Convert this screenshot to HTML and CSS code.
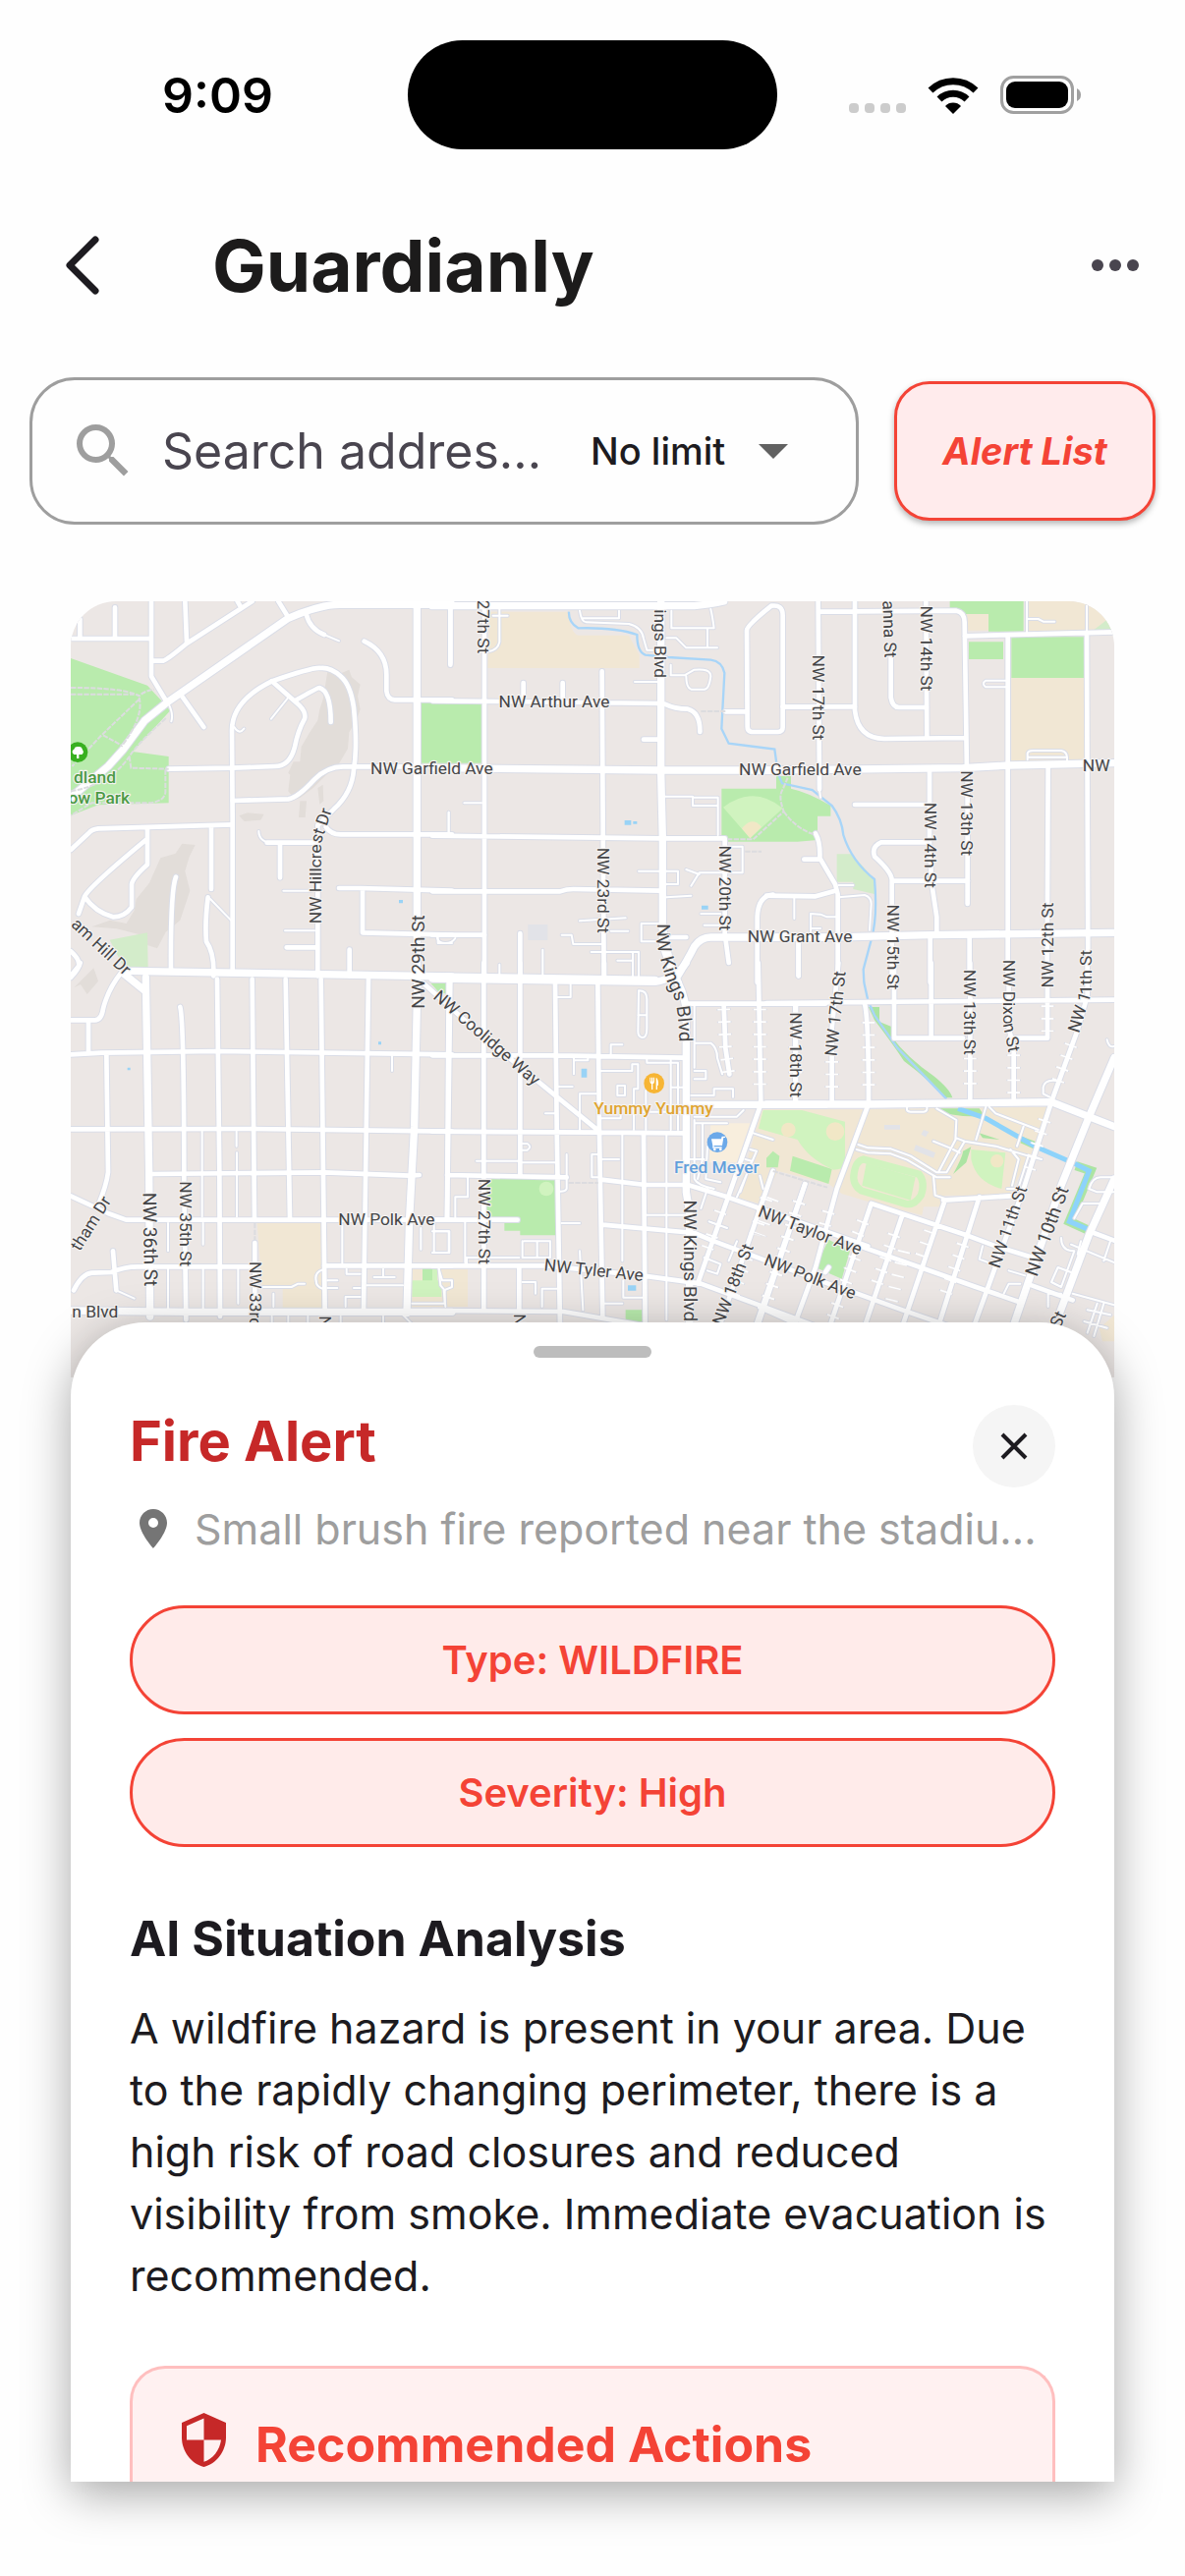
FILE: index.html
```
<!DOCTYPE html>
<html lang="en">
<head>
    <meta charset="utf-8">
    <meta name="viewport" content="width=device-width, initial-scale=1">
    <title>Guardianly</title>
    <link rel="stylesheet" href="styles.css">
</head>
<body>
    <div class="status-bar">
        <span class="status-time">9:09</span>
        <span class="island"></span>
        <div class="status-icons">
            <span class="signal"><i></i><i></i><i></i><i></i></span>
            <svg class="wifi" viewBox="0 0 52 38" aria-hidden="true">
                <path class="wifi-arc" d="M3 14A33 33 0 0 1 49 14M12 23A20 20 0 0 1 40 23"/>
                <path d="M26 38L18 30A11 11 0 0 1 34 30Z"/>
            </svg>
            <svg class="battery" viewBox="0 0 83 39" aria-hidden="true">
                <rect x="1.5" y="1.5" width="72" height="36" rx="12" fill="none" stroke="#a0a0a0" stroke-width="3"/>
                <rect x="6" y="6" width="63" height="27" rx="9"/>
                <path d="M78 13Q82 15 82 19.500T78 26Z" fill="#a0a0a0"/>
            </svg>
        </div>
    </div>

    <header class="app-bar">
        <button class="icon-button" aria-label="Back">
            <svg class="back-icon" viewBox="0 0 36 60"><path d="M31 4L5 30L31 56"/></svg>
        </button>
        <h1 class="app-title">Guardianly</h1>
        <button class="icon-button" aria-label="More">
            <svg class="more-icon" viewBox="0 0 50 14"><circle cx="7" cy="7" r="6"/><circle cx="25" cy="7" r="6"/><circle cx="43" cy="7" r="6"/></svg>
        </button>
    </header>

    <div class="toolbar">
        <div class="search-box">
            <svg class="search-icon" viewBox="3 3 18 18" aria-hidden="true"><path d="M15.5 14h-.79l-.28-.27A6.47 6.47 0 0 0 16 9.500 6.500 6.500 0 1 0 9.500 16c1.610 0 3.090-.59 4.230-1.570l.27.28v.79l5 4.990L20.490 19zm-6 0C7.010 14 5 11.990 5 9.500S7.010 5 9.500 5 14 7.010 14 9.500 11.990 14 9.500 14"/></svg>
            <input class="search-input" type="text" placeholder="Search addres..." aria-label="Search address">
            <select class="limit-select" aria-label="Distance limit">
                <option>No limit</option>
            </select>
            <span class="caret"></span>
        </div>
        <button class="alert-button">Alert List</button>
    </div>

    <main class="content">
        <svg class="map" viewBox="0 0 3186 2370" role="img" aria-label="Map">
            <defs>
                <g id="roads">
                    <!-- north west -->
                    <g transform="translate(-36 -36)">
                        <path class="major" d="M36 635L150 540L195 490L262 400L330 345L700 88Q800 45 860 46H1200M1093 46V1175M215 1165L1200 1182"/>
                        <path class="street" d="M36 150H280M64 90V150M171 55V150M282 36V265L330 345M385 36L390 160M285 218H318Q330 215 390 165L590 36M545 36L556 55M670 36L700 85M755 75Q765 120 810 138M932 158Q1000 190 1000 260V310Q1003 336 1025 337H1200M1195 60V230M375 325L442 420"/>
                        <path class="street" d="M530 1170L530 700L528 430Q528 340 650 280Q780 235 800 240Q830 238 860 265Q890 290 900 360Q912 480 900 550Q895 620 840 670L790 720V1180M815 725Q830 748 860 748H1200"/>
                        <path class="street" d="M650 280L735 355Q755 375 750 395Q730 430 720 480Q705 540 660 540L528 545L335 548M720 340Q790 300 795 300Q830 310 830 405M530 645L700 640Q730 635 780 580Q820 540 870 541H1107"/>
                        <path class="street" d="M530 718L120 730Q100 732 90 745L36 795M270 730V840Q225 880 222 900V970Q200 1000 165 1000Q110 985 78 938Q90 910 265 765M78 938L60 990M465 725V915M455 940Q445 1020 450 1075Q475 1110 472 1180M357 878Q340 920 342 1170M635 773H790M675 780V880M887 1100V1180M695 1093H783M855 912H920L1200 920M927 915V1048L1200 1055M36 1105Q65 1130 60 1150L36 1180"/>
                        <path class="lane" d="M610 738Q610 770 650 775M810 138L855 157M685 920H770M690 1042H780M700 330L648 395M462 945L525 1010M1190 680V745M535 420Q550 445 565 425M335 350Q350 380 343 403M1157 1060V1080H1200"/>
                    </g>
                    <!-- north -->
                    <g transform="translate(1104 -36)">
                        <path class="major" d="M0 50H800Q850 45 890 36M698 36V560L703 760V1030Q720 1140 750 1200M740 1195Q780 1130 800 1090Q820 1062 850 1062H1200M0 545L700 552H1100M0 1182L680 1192"/>
                        <path class="street" d="M159 60V1180M0 340L200 342L700 348M518 250L524 1190M55 60V225M278 285V340M398 285V340M0 752L700 760H893V1050L905 1140M0 922H390Q410 915 430 915L700 920M0 1055H160M268 1050V1180M645 458H690M710 350Q740 365 780 365Q818 375 817 435M895 373H960M1070 358H1200M725 1062H775M1118 1070V1180M992 1200V1000Q995 935 1040 932"/>
                        <path class="street" d="M960 125Q960 110 1035 50Q1070 45 1070 80V420Q1070 435 1055 435H975Q962 433 962 420Z"/>
                        <path class="lane" d="M450 65Q455 100 470 100L600 105Q640 115 645 150L655 185H700M460 88H570V65M730 65V118H860Q855 80 850 60M840 118V178M715 148H745L775 178H870M728 230V262H770L800 245Q850 240 850 265Q845 305 830 305H790Q775 300 775 265M618 282H690M710 632H795V660H872M795 635H872V750"/>
                        <path class="lane" d="M630 860H750V900H715M715 940L790 935M638 1020V1075H690M638 1020H690M395 1055H425L430 1083H518M450 1012L590 1003M485 1107H630V1180M565 1133H612V1110V1180M545 1043H598M337 1100V1180M205 1145V1180M50 680V750M97 652H150M947 785V865H815L790 905M775 855L815 870M900 785H947M820 990H880M830 1025H880M205 60V160Q200 185 170 190M185 80H230M1105 940V1005M15 1065Q20 1080 40 1080T70 1065"/>
                    </g>
                    <!-- north east -->
                    <g transform="translate(2124 -36)">
                        <path class="major" d="M0 552L600 545L740 537L1062 530M0 1062H200L500 1055L1062 1048"/>
                        <path class="street" d="M158 36L162 610M270 36V370Q280 455 360 456L605 453M160 68L580 65Q605 70 605 100L612 560M380 205V330Q385 360 405 360H490M487 36L490 450M605 142L1062 130M737 145V1200M978 135L982 1140M860 545L857 1140M498 550V780L505 900L520 1000V1050M270 657H498"/>
                        <path class="street" d="M490 772H350Q320 785 330 815Q380 860 383 885V1200M383 890H615M614 560V960M50 358H270M500 1060V1200M620 1060V1200M150 745Q165 770 163 820L210 900L218 930V1200M115 824H163M0 935L150 937L210 920M98 1080V1180"/>
                        <path class="lane" d="M795 36V130M730 278H670Q655 288 670 298H730M797 520V500Q800 490 820 492H900Q920 495 918 520M800 512H918M795 90H830L845 98H880M220 940L300 933Q320 940 320 960L315 1040M135 1060V990L165 992L185 1000H215M140 1035H165M220 903H265M162 610L165 635M978 50V130"/>
                    </g>
                    <!-- south west -->
                    <g transform="translate(-36 1104)">
                        <path class="major" d="M200 35L262 85M265 45L275 640L278 1080M1095 30L1085 500L1070 780L1062 1070M36 1062L400 1066L1200 1066"/>
                        <path class="street" d="M483 50L490 640L492 1080M590 50L597 780M692 50L705 780M800 50L812 1070M945 50L930 1070M370 135Q382 180 382 680L388 1090M598 855V1060M1190 50L1185 780"/>
                        <path class="street" d="M36 280L130 275L480 270L1200 280M36 508L590 507L1200 515M285 645L810 640L1070 650L1100 648M36 712L150 765L205 785H1200M145 280L150 640Q145 680 120 740M36 175H110Q130 175 135 140Q150 80 190 30M90 180V275M45 1000Q70 950 100 947L160 945Q200 928 240 928H590M165 880L175 1000M810 925H1200M36 45Q60 20 65 0"/>
                        <path class="lane" d="M175 1000L230 1025M437 515V775M440 795V860M440 935V1055M542 515V560M543 580V775M547 930V1040M333 795V880M333 935V1055M865 800V920M1017 285V330M600 990H710L730 980H750M655 1010V1050M805 937Q780 945 785 970Q785 990 805 995M820 970H850M820 993H850M900 993H920M940 985H1050M962 960H1025M990 935V960M878 935V950H920M875 1050V1020H920M1145 790V885H1192V820H1145M1105 810V875M1160 935L1165 985L1178 1000V1040H1078"/>
                        <path class="lane" d="M650 1080V1100M700 1080V1100M760 1080V1100M860 1080V1100M990 1080V1100M1050 1075L1080 1105"/>
                    </g>
                    <!-- south -->
                    <g transform="translate(1104 1104)">
                        <path class="major" d="M0 48L680 58Q740 50 775 0M703 -110V-60Q720 0 750 60Q780 120 775 180V700L785 760V1120M780 433H1200"/>
                        <path class="street" d="M-30 60L160 230L510 515M55 60L45 780M157 0V1060M268 0V650M265 925V1060M375 60L380 500L390 1120M505 60L510 520L520 1080M525 0V50M0 283H380L770 290M0 515L510 518L770 520M0 785H260M45 648L410 655M515 662L650 678H780L900 715L1000 750L1330 865M520 800L800 825L860 850L1020 910L1290 1010"/>
                        <path class="street" d="M645 525L650 1120M0 925H350L640 955L750 970L820 980L1200 1120M0 1062L400 1065L660 1110M1000 440L810 980M780 125H1200M995 0L1003 430M890 130L895 260L907 340M1108 130V430M1040 635L880 1100M1138 675L990 1120"/>
                        <path class="lane" d="M630 85Q655 85 655 110V200Q655 230 640 228Q628 225 628 210ZM628 160H655M380 105H422V65M545 280V250H580M432 290V340M432 298H475V290M515 330H610V310H628V385H615V510M655 290V305H750V510M728 295V510M728 380H770M565 375H588V405H565ZM640 455H760M652 390V510M450 510V400H500M345 460H375M385 378H428M515 475H575V450"/>
                        <path class="lane" d="M800 130V320M800 245H850Q870 260 870 290L885 340M800 330H835V355H800M790 405H860V385H918V410M800 480V660Q810 680 860 690M825 490V600L810 660M800 470H930L950 450M840 560L835 660L880 670M800 490H900M780 600H830M580 525V910M583 970V1022H650M715 520V1090M505 585H487V655H505M515 600H570M410 585V690Q405 700 385 698M265 610H380M135 605H265M270 552H290Q305 562 290 572H272M108 650V715H70V780"/>
                        <path class="lane" d="M395 795H450M655 770H780M280 850H360V900H275V850M320 850V900M100 790V915M0 820H50V885H0M450 880L460 1060M335 1050V995H380M275 975H315V1010M20 935L30 970H60V990L35 1000L40 1050M105 925V900H265M970 570L990 575L930 715M955 600L975 605L940 700M1000 650L1010 690M980 520L1040 540M820 750L840 690M845 790L900 810M830 900L880 920L870 950L840 940M525 1040H580M930 850L905 910"/>
                        <path class="drives" d="M890 140L895 260L905 340M1000 140V400M1108 180V400M1020 720L985 830M1120 730L1010 1070M880 760L830 900M960 900L910 1040"/>
                    </g>
                    <!-- south east -->
                    <g transform="translate(2124 1104)">
                        <path class="major" d="M0 432H310L870 425L985 470L1062 500M1062 290L985 470L900 680L750 1120M1062 660L985 830L895 1070"/>
                        <path class="street" d="M0 123L300 120L1062 113M300 125Q312 170 312 430L215 690L150 930L80 1120M390 0V230H600M740 230H858V0M503 0V230M622 0V415M740 0V200L755 260V415M200 420V200L220 0M90 130V430M980 0V100L950 205L870 425L785 690L630 1120"/>
                        <path class="street" d="M320 735L190 1120M415 770L300 1110M545 725L415 1110M650 715L525 1110M250 1000L415 1060L560 1110M285 865L640 990L770 1035M320 735L620 835L700 865L830 905M540 725L745 712M-20 1052L110 1110M810 985L935 1030M118 675L-30 1100M1000 825L1062 848M190 930L180 945"/>
                        <path class="lane" d="M280 555L310 565L380 568L440 590L520 640H550L605 545L580 535L525 640M275 570L310 580L380 583L430 602L520 655H560M577 540L580 480L520 445M605 545L700 560L800 590L840 600M800 590L765 700M745 570L770 600L750 680M735 690H765M680 440L700 460L830 510M670 440L640 540M785 500L765 560M510 650L515 710L545 720M430 440Q425 455 440 455H480Q492 455 490 440M570 570L590 580M510 545L560 565"/>
                        <path class="lane" d="M985 690Q995 655 1020 655H1062M985 690L1010 700H1062M940 780L965 735H1030L1000 800M930 860L1062 915M960 850L950 890M1050 850L1030 910M935 1010L1062 1045M1010 1040L980 1130M1030 1040L1000 1140M980 1060L1050 1075M970 1095L1040 1115M845 380Q850 355 885 360M845 380V400L865 410M900 840Q900 880 940 880L900 990L870 975L890 930L930 945M740 940L790 955M725 1010L740 980H775M1040 235Q1045 260 1062 255M660 865L650 905L690 920M900 1010H860V1050"/>
                        <path class="drives" d="M312 180V400M622 290V400M755 280V400M200 300V410M90 180V400M858 130V210M930 250L880 390M850 480L800 640M20 720L-20 830M100 730L0 1040M295 790L270 850M270 900L200 1090M190 760L170 830M390 830L330 1000M500 820L450 960M600 860L540 1030M420 880L380 1040"/>
                    </g>
                </g>
            </defs>

            <rect class="land" width="3186" height="2370"/>

            <g class="terrain">
                <path d="M784 214L820 222L850 209L858 232L884 254L876 290L884 330L872 364L850 400L846 450L814 504L780 530L740 570L700 600L684 604L664 580L670 530L664 524L680 490L700 490L704 444L730 400L754 364L760 330L770 300Z"/>
                <path d="M274 784L320 770L340 740L380 744L362 780L349 824L364 884L334 974L290 1010L264 1060L234 1050L234 1024L140 1000L64 994L120 974L170 984L194 944L200 910L240 860Z"/>
                <path d="M514 655L540 646L590 650L580 668L530 672ZM700 610H720L716 660H696ZM754 570L770 560L772 610L760 620ZM10 1180L70 1120L84 1160L50 1200L30 1170Z"/>
            </g>

            <g class="tan">
                <path d="M1279 32H1519Q1524 94 1549 104H1704L1736 164V204H1272Z"/>
                <path d="M2872 234H3096V489H2872ZM2920 0H3186V90H2920ZM2734 39H2802V89H2734Z"/>
                <path d="M569 1899H764L770 2159H647V2096H584ZM1042 2039H1212V2154H1042Z"/>
                <path d="M2109 1552H2434L2984 1544L2944 1664L2864 1814H2669L2654 1849H2604L2599 1874L2454 1839L2354 1809L2314 1779L2160 1740L2104 1840L2034 1820Z"/>
                <path class="mall" d="M1954 1594H2074L2034 1714H1949Z"/>
                <path d="M3140 2220L3186 2180V2260H3150Z"/>
            </g>

            <g class="park">
                <path d="M0 174L234 257L282 309L304 334L189 459L299 474V616L84 622L0 654Z"/>
                <path d="M1071 309H1256V494H1071ZM2684 0H2909V92H2802V39H2684ZM2742 124H2847V177H2742ZM2872 109H3096V234H2872Z"/>
                <path d="M1987 572H2154V534H2199V572Q2254 584 2320 624V656H2280V729L2219 734H1987Z"/>
                <path d="M1099 1166H1152V1199L1124 1194ZM1269 1764H1484V1936H1372V1922H1324V1889H1269ZM1694 2164H1749V2200H1694ZM1074 2037H1119V2077H1074Z"/>
                <path d="M2204 1694L2324 1734L2314 1779L2196 1739ZM2124 1700L2144 1679L2164 1694L2159 1729H2124Z"/>
                <path d="M2314 1949L2379 1984L2354 2069L2274 2034Z"/>
                <path class="bank" d="M2436 1239H2469V1284L2506 1299V1329Q2554 1394 2634 1449Q2684 1489 2692 1516H2669Q2624 1464 2544 1404Q2504 1344 2454 1279ZM2654 1549H2774L2792 1574L2724 1572L2664 1564ZM2774 1624L2836 1644L2784 1639ZM2749 1666L2734 1714L2694 1749Q2724 1694 2724 1679ZM2904 1634L2944 1649V1674L2899 1654Z"/>
                <path class="pale" d="M119 1034L234 1012L236 1122H164ZM2339 772H2384L2454 849V894L2389 879V857H2339ZM3120 90L3186 40V90Z"/>
            </g>

            <g class="field">
                <path d="M1992 629Q2084 559 2174 632L2074 724ZM1042 2074H1132V2124H1042ZM1104 2039H1119V2124H1104Z"/>
                <circle cx="1452" cy="1794" r="22"/>
                <path d="M2114 1554H2232L2364 1589V1724Q2354 1734 2329 1736Q2254 1704 2219 1644L2100 1610Z"/>
                <path d="M2749 1674L2854 1684L2842 1794Q2764 1774 2749 1704Z"/>
                <path d="M2429 1716L2579 1759L2564 1829L2416 1784Z"/>
                <path class="track" d="M2420 1704L2590 1750Q2610 1775 2596 1814Q2576 1846 2550 1840L2414 1800Q2384 1780 2392 1744Q2398 1708 2420 1704Z"/>
            </g>
            <g class="sand">
                <path d="M2049 694Q2079 654 2109 689L2074 724Z"/>
                <circle cx="2191" cy="1614" r="22"/>
                <circle cx="2334" cy="1619" r="28"/>
                <circle cx="2828" cy="1709" r="20"/>
            </g>

            <path class="building" d="M1396 987H1456V1035H1396ZM2484 1599H2532V1613H2484ZM2580 1660L2640 1684L2634 1700L2574 1676ZM2604 1614L2620 1620L2610 1636L2596 1628Z"/>
            <path class="pond" d="M1691 669H1711V683H1691ZM1717 672H1729V680H1717ZM1926 929H1946V941H1926ZM1002 912H1014V922H1002ZM1559 1427H1576V1454H1559ZM1701 2089H1726V2105H1701ZM173 1424H182V1432H173ZM939 1345H948V1354H939Z"/>
            <path class="creek" d="M1521 32Q1519 64 1549 82Q1664 79 1729 102Q1729 154 1754 164L1824 171L1954 179Q1989 184 1996 219L1987 389L2009 434L2149 452L2159 524L2172 556L2264 576L2324 624Q2354 664 2359 714Q2384 794 2454 849Q2464 964 2444 1034L2420 1124L2422 1164L2434 1219L2454 1264L2524 1364L2674 1520"/>
            <path class="river-bank" d="M3069 1724L3114 1739L3049 1894L3104 1919"/>
            <path class="river" d="M2709 1549L2794 1579L2944 1664L3069 1719L3109 1739L3049 1894L3109 1919"/>
            <path class="creek" d="M3109 1919L3186 1954"/>

            <use href="#roads" class="casing"/>
            <use href="#roads" class="surface"/>

            <g class="trails">
                <path d="M0 264Q164 264 209 289Q224 274 254 269M0 284H194M209 294Q224 354 154 444M209 299L94 409L4 504M99 409L154 439M0 580Q120 560 179 474Q204 434 294 354M179 474L184 509L299 512M289 514V584Q284 614 234 616H64L0 654"/>
                <path d="M2004 727H2084L2177 642Q2159 594 2174 574L2189 539M2177 642Q2214 694 2269 712M1924 336H1999M2059 764H2109M562 1899V1950M1520 1776H1610M2144 1740L2310 1790"/>
            </g>

            <g class="labels">
                <text x="1476" y="325">NW Arthur Ave</text>
                <text x="1102" y="527">NW Garfield Ave</text>
                <text x="2227" y="530">NW Garfield Ave</text>
                <text x="3131" y="518">NW</text>
                <text x="2226" y="1042">NW Grant Ave</text>
                <text x="964" y="1905">NW Polk Ave</text>
                <text class="to-start" x="4" y="2187">n Blvd</text>
                <text class="to-end" transform="translate(1243 160) rotate(90)">27th St</text>
                <text class="to-end" transform="translate(1783 234) rotate(90)">ings Blvd</text>
                <text transform="translate(2266 294) rotate(90)">NW 17th St</text>
                <text class="to-end" transform="translate(2485 173) rotate(88)">anna St</text>
                <text transform="translate(2594 144) rotate(90)">NW 14th St</text>
                <text transform="translate(2719 647) rotate(90)">NW 13th St</text>
                <text transform="translate(2606 745) rotate(90)">NW 14th St</text>
                <text transform="translate(2494 1056) rotate(90)">NW 15th St</text>
                <text transform="translate(2999 1050) rotate(-90)">NW 12th St</text>
                <text transform="translate(2728 1255) rotate(90)">NW 13th St</text>
                <text transform="translate(2196 1385) rotate(90)">NW 18th St</text>
                <text transform="translate(2352 1261) rotate(-84)">NW 17th St</text>
                <text transform="translate(1608 883) rotate(90)">NW 23rd St</text>
                <text transform="translate(1979 876) rotate(90)">NW 20th St</text>
                <text class="label-major" transform="translate(1871 2014) rotate(90)">NW Kings Blvd</text>
                <text transform="translate(1259 1346) rotate(41)">NW Coolidge Way</text>
                <text class="label-major" transform="translate(1079 1101) rotate(-90)">NW 29th St</text>
                <text transform="translate(81 1067) rotate(43)">am Hill Dr</text>
                <text class="label-major" transform="translate(223 1949) rotate(89)">NW 36th St</text>
                <text transform="translate(333 1901) rotate(90)">NW 35th St</text>
                <text class="to-start" transform="translate(546 2016) rotate(90)">NW 33rd</text>
                <text transform="translate(76 1909) rotate(-58)">tham Dr</text>
                <text transform="translate(1244 1894) rotate(90)">NW 27th St</text>
                <text transform="translate(1595 2060) rotate(6)">NW Tyler Ave</text>
                <text transform="translate(2038 2093) rotate(-69)">NW 18th St</text>
                <text transform="translate(2251 1937) rotate(21)">NW Taylor Ave</text>
                <text transform="translate(2251 2079) rotate(21)">NW Polk Ave</text>
                <text transform="translate(2878 1916) rotate(-71)">NW 11th St</text>
                <text class="label-major" transform="translate(2999 1930) rotate(-70)">NW 10th St</text>
                <text class="to-start" transform="translate(758 2182) rotate(90)">N</text>
                <text class="to-start" transform="translate(1352 2176) rotate(90)">N</text>
                <text transform="translate(3030 2200) rotate(-65)">St</text>
                <path id="kings" d="M1791 985V1050Q1812 1150 1834 1190Q1862 1240 1858 1420"/>
                <path id="hillcrest" d="M764 985V740L810 600"/>
                <path id="dixon" d="M2846 1094V1290L2872 1420"/>
                <path id="eleventh" d="M3078 1320L3118 1190V1000"/>
                <text class="label-major to-start"><textPath href="#kings">NW Kings Blvd</textPath></text>
                <text class="to-start"><textPath href="#hillcrest">NW Hillcrest Dr</textPath></text>
                <text class="to-start"><textPath href="#dixon">NW Dixon St</textPath></text>
                <text class="to-start"><textPath href="#eleventh">NW 11th St</textPath></text>
                <text class="label-park to-end" x="138" y="554">dland</text>
                <text class="label-park to-end" x="180" y="618">ow Park</text>
                <text class="label-food" x="1779" y="1566">Yummy Yummy</text>
                <text class="label-shop" x="1972" y="1746">Fred Meyer</text>
            </g>

            <circle cx="21" cy="461" r="31" fill="#38b020"/>
            <path fill="#fff" d="M6 464Q2 456 10 452Q12 442 22 444Q34 442 36 454Q42 462 34 468H25V480H18V468H10Z"/>
            <circle cx="1781" cy="1472" r="31" fill="#f7b534"/>
            <path fill="#fff" d="M1768 1454V1466Q1769 1472 1773 1474V1491H1777V1474Q1782 1472 1782 1466V1454H1779V1466H1777V1454H1773V1466H1771V1454ZM1787 1454Q1795 1458 1794 1478H1791V1491H1787Z"/>
            <circle cx="1974" cy="1652" r="31" fill="#6ca9e9"/>
            <path fill="#fff" d="M1990 1634H1998V1638H1993L1989 1662H1964V1666H1988V1670H1960V1662L1956 1642H1986L1988 1634Z"/>
            <circle cx="1966" cy="1674" r="4" fill="#fff"/>
            <circle cx="1984" cy="1674" r="4" fill="#fff"/>
        </svg>

        <section class="sheet">
            <div class="handle"></div>
            <div class="sheet-header">
                <h2 class="sheet-title">Fire Alert</h2>
                <button class="close-button" aria-label="Close">
                    <svg class="close-icon" viewBox="0 0 30 30"><path d="M3 3L27 27M27 3L3 27"/></svg>
                </button>
            </div>
            <div class="place">
                <svg class="pin-icon" viewBox="5 2 14 20" aria-hidden="true"><path d="M12 2C8.130 2 5 5.130 5 9c0 5.250 7 13 7 13s7-7.750 7-13c0-3.870-3.130-7-7-7m0 9.500A2.500 2.500 0 1 1 12 6.500a2.500 2.500 0 0 1 0 5"/></svg>
                <p class="place-text">Small brush fire reported near the stadiu...</p>
            </div>
            <div class="chips">
                <div class="chip">Type: WILDFIRE</div>
                <div class="chip">Severity: High</div>
            </div>
            <h3 class="section-title">AI Situation Analysis</h3>
            <p class="analysis">A wildfire hazard is present in your area. Due to the rapidly changing perimeter, there is a high risk of road closures and reduced visibility from smoke. Immediate evacuation is recommended.</p>
            <div class="actions-card">
                <svg class="shield-icon" viewBox="3 1 18 22" aria-hidden="true"><path d="M12 1L3 5v6c0 5.550 3.840 10.740 9 12 5.160-1.260 9-6.450 9-12V5zm0 11h7c-.53 4.120-3.280 7.790-7 8.940V12H5V6.300l7-3.110z"/></svg>
                <h3 class="actions-title">Recommended Actions</h3>
            </div>
        </section>
    </main>
</body>
</html>
```
FILE: styles.css
```
* {
    box-sizing: border-box;
}

body {
    margin: 0;
    height: 100vh;
    display: flex;
    flex-direction: column;
    overflow: hidden;
    background: #fefefe;
    color: #1d1b20;
    font-family: Inter, "Open Sans", sans-serif;
}

h1, h2, h3, p {
    margin: 0;
}

button {
    border: none;
    background: none;
    padding: 0;
    font-family: inherit;
}

/* status bar */
.status-bar {
    display: grid;
    grid-template-columns: 1fr auto 1fr;
    align-items: center;
    padding-top: 41px;
}

.status-time {
    padding-left: 165px;
    color: #000;
    font-size: 50px;
    font-weight: 600;
}

.island {
    width: 376px;
    height: 111px;
    border-radius: 56px;
    background: #000;
}

.status-icons {
    display: flex;
    justify-content: flex-end;
    align-items: center;
    gap: 22px;
    padding-right: 105px;
}

.signal {
    display: flex;
    gap: 6px;
    padding-top: 26px;
}

.signal i {
    width: 10px;
    height: 10px;
    border-radius: 4px;
    background: #ccc;
}

.wifi {
    width: 52px;
    height: 38px;
}

.wifi-arc {
    fill: none;
    stroke: #000;
    stroke-width: 7;
}

.battery {
    width: 83px;
    height: 39px;
}

/* app bar */
.app-bar {
    display: flex;
    align-items: center;
    height: 168px;
    margin-top: 34px;
    padding: 0 46px 0 66px;
}

.icon-button {
    display: flex;
}

.back-icon {
    width: 36px;
    height: 60px;
    fill: none;
    stroke: #1d1b20;
    stroke-width: 7;
    stroke-linecap: round;
    stroke-linejoin: round;
}

.app-title {
    flex: 1;
    margin-left: 114px;
    color: #1c1b1b;
    font-size: 73px;
    font-weight: 700;
}

.more-icon {
    width: 50px;
    height: 14px;
    fill: #49454f;
}

/* search row */
.toolbar {
    display: flex;
    align-items: center;
    gap: 36px;
    padding: 30px 30px 78px;
}

.search-box {
    flex: 1;
    min-width: 0;
    display: flex;
    align-items: center;
    height: 150px;
    padding: 0 69px 0 45px;
    border: 3px solid #9e9e9e;
    border-radius: 46px;
}

.search-icon {
    width: 54px;
    height: 54px;
    flex: none;
    fill: #9e9e9e;
}

.search-input {
    flex: 1;
    min-width: 0;
    margin-left: 33px;
    padding: 0;
    border: none;
    background: none;
    font-family: inherit;
    font-size: 50px;
    outline: none;
}

.search-input::placeholder {
    color: #49454f;
    opacity: 1;
}

.limit-select {
    appearance: none;
    padding: 0;
    border: none;
    background: none;
    color: #1d1b20;
    font-family: inherit;
    font-size: 38px;
    font-weight: 500;
}

.caret {
    margin-left: 33px;
    border: 15px solid transparent;
    border-top-color: #616161;
    border-bottom: none;
}

.alert-button {
    width: 266px;
    height: 142px;
    border: 3px solid #f44336;
    border-radius: 36px;
    background: #ffebec;
    color: #f44336;
    font-size: 38px;
    font-weight: 700;
    font-style: italic;
    box-shadow: 0 3px 6px rgba(0, 0, 0, 0.3);
}

/* map */
.content {
    flex: 1;
    min-height: 0;
    display: flex;
    flex-direction: column;
    margin: 0 72px 96px;
}

.map {
    display: block;
    flex: none;
    width: 100%;
    border-radius: 46px 46px 0 0;
}

.land {
    fill: #ece7e5;
}

.terrain {
    fill: #e2ddd9;
}

.tan {
    fill: #f1e7d4;
}

.mall {
    fill: #f8eedd;
}

.park {
    fill: #b9ebad;
}

.bank {
    fill: #ace4a3;
}

.pale {
    fill: #d3ecca;
}

.field {
    fill: #d0f3bf;
}

.track {
    fill: none;
    stroke: #d0f3bf;
    stroke-width: 22;
}

.sand {
    fill: #f1e7c6;
}

.building {
    fill: #e2e3e8;
}

.pond {
    fill: #99d3f6;
}

.creek, .river, .river-bank {
    fill: none;
    stroke: #a8d5f8;
    stroke-width: 7;
}

.river {
    stroke: #8dd3fb;
    stroke-width: 15;
}

.river-bank {
    stroke: #ace4a3;
    stroke-width: 28;
}

.casing {
    --edge: 6px;
    stroke: #dadde7;
}

.surface {
    --edge: 0px;
    stroke: #fff;
}

#roads path {
    fill: none;
    stroke-linecap: round;
    stroke-linejoin: round;
}

#roads .major {
    stroke-width: calc(22px + var(--edge));
}

#roads .street {
    stroke-width: calc(14px + var(--edge));
}

#roads .lane {
    stroke-width: calc(6px + var(--edge));
}

/* driveways: short ticks across the street */
#roads .drives {
    stroke-width: calc(38px + var(--edge));
    stroke-linecap: butt;
    stroke-dasharray: 5 33;
}

.trails {
    fill: none;
    stroke: #dcdcdf;
    stroke-width: 6;
    stroke-dasharray: 16 4;
}

.labels {
    fill: #454547;
    stroke: #f4f2f1;
    stroke-width: 7;
    stroke-linejoin: round;
    paint-order: stroke;
    font-family: Roboto, sans-serif;
    font-size: 52px;
    font-weight: 400;
    text-anchor: middle;
}

.labels path {
    fill: none;
    stroke: none;
}

.label-major {
    font-size: 57px;
}

.to-end {
    text-anchor: end;
}

.to-start {
    text-anchor: start;
}

.label-park {
    fill: #4c9a45;
    font-weight: 500;
}

.label-food {
    fill: #e0a431;
    font-weight: 500;
}

.label-shop {
    fill: #629fdc;
    font-weight: 500;
}

/* bottom sheet */
.sheet {
    position: relative;
    flex: 1;
    min-height: 0;
    margin-top: -56px;
    padding: 24px 60px 0;
    border-radius: 76px 76px 0 0;
    background: #fff;
    box-shadow: 0 12px 48px rgba(0, 0, 0, 0.35);
    display: flex;
    flex-direction: column;
}

.handle {
    flex: none;
    width: 120px;
    height: 12px;
    margin: 0 auto;
    border-radius: 6px;
    background: #bdbdbd;
}

.sheet-header {
    display: flex;
    justify-content: space-between;
    align-items: flex-start;
    margin-top: 48px;
}

.sheet-title {
    color: #c62828;
    font-size: 56px;
    font-weight: 700;
    line-height: 74px;
}

.close-button {
    display: flex;
    justify-content: center;
    align-items: center;
    width: 84px;
    height: 84px;
    border-radius: 50%;
    background: #f5f5f5;
}

.close-icon {
    width: 30px;
    height: 30px;
    stroke: #1d1b20;
    stroke-width: 4;
}

.place {
    display: flex;
    align-items: center;
    gap: 28px;
    margin-top: 12px;
    padding-left: 10px;
}

.pin-icon {
    flex: none;
    width: 28px;
    height: 40px;
    fill: #757575;
}

.place-text {
    color: #9e9e9e;
    font-size: 43px;
    line-height: 60px;
    white-space: nowrap;
}

.chips {
    display: flex;
    flex-direction: column;
    gap: 24px;
    margin-top: 48px;
}

.chip {
    padding: 24px;
    border: 3px solid #f44336;
    border-radius: 56px;
    background: #ffebea;
    color: #f44336;
    font-size: 40px;
    font-weight: 600;
    line-height: 57px;
    text-align: center;
}

.section-title {
    margin-top: 63px;
    font-size: 50px;
    font-weight: 700;
    line-height: 60px;
}

.analysis {
    margin-top: 30px;
    font-size: 43px;
    line-height: 63px;
}

/* the card runs on below the fold of the sheet */
.actions-card {
    flex: 1;
    min-height: 0;
    overflow: hidden;
    display: flex;
    align-items: flex-start;
    gap: 30px;
    margin-top: 60px;
    padding: 45px 50px 0;
    border: 3px solid #ffbfbf;
    border-bottom: none;
    border-radius: 36px 36px 0 0;
    background: #fff1f1;
}

.shield-icon {
    flex: none;
    width: 45px;
    height: 55px;
    fill: #c62828;
}

.actions-title {
    color: #f44336;
    font-size: 50px;
    font-weight: 700;
    line-height: 64px;
}
```
